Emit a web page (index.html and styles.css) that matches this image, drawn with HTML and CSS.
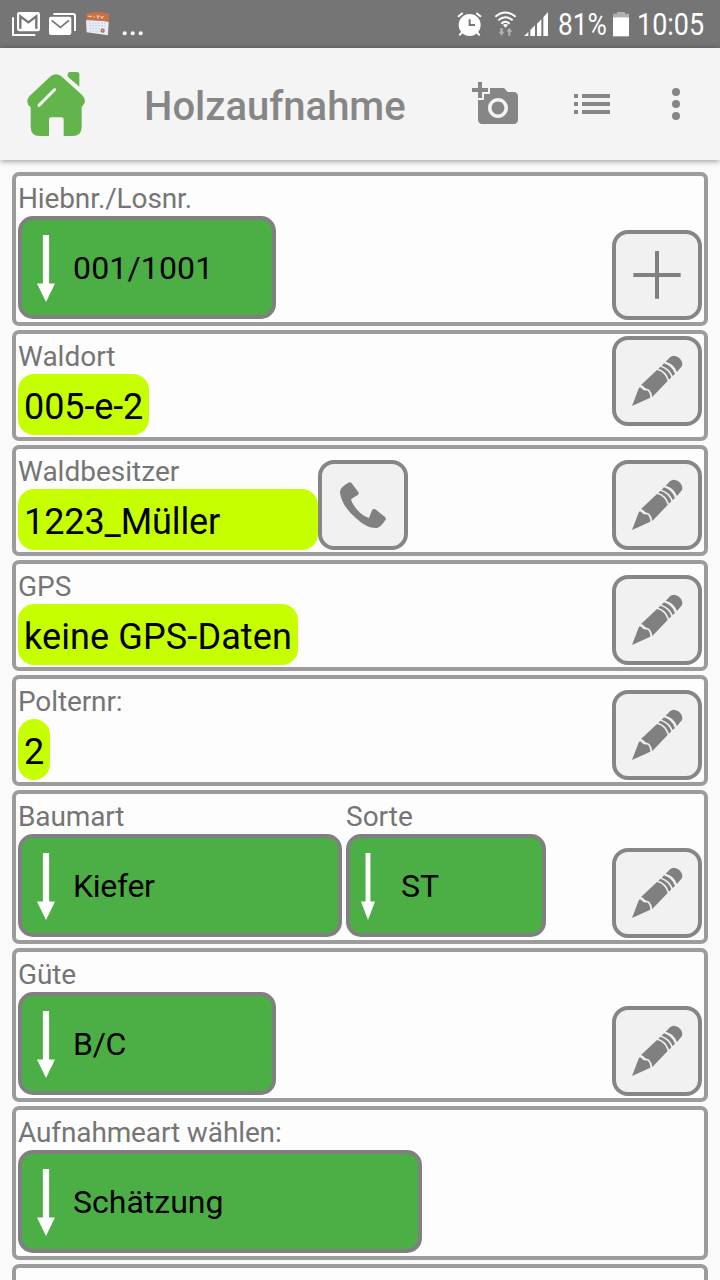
FILE: index.html
```
<!DOCTYPE html>
<html lang="de">
<head>
<meta charset="utf-8">
<title>Holzaufnahme</title>
<link rel="stylesheet" href="styles.css">
</head>
<body>
<svg class="defs" width="0" height="0" aria-hidden="true">
  <symbol id="pencil" viewBox="78 525 246 246">
    <path d="M126 723L147 668Q153 666 156 671Q160 677 168 676Q176 677 178 684Q181 690 181 698Z"/>
    <path d="M153 660L201 615Q224 620 233 648L187 696Q186 683 178 674Q170 671 165 669Q160 662 153 660Z"/>
    <path d="M205 611L211 605Q237 614 244 637L237 644Q227 617 205 611Z"/>
    <path d="M215 602L222 595Q248 604 255 627L248 633Q239 610 215 602Z"/>
    <path d="M227 590L240 577Q250 568 265 577Q280 588 276 603L261 621Q252 596 227 590Z"/>
  </symbol>
  <symbol id="arrow" viewBox="0 0 55 200" preserveAspectRatio="none">
    <path d="M18 0H37V145H55L27.500 200L0 145H18Z"/>
  </symbol>
</svg>

<div class="status">
  <svg class="notices" width="150" height="48" viewBox="0 0 450 144">
    <path d="M39 52V105H106" fill="none" stroke="#fff" stroke-width="6"/>
    <rect x="51" y="36" width="69" height="58" rx="7" fill="#fff"/>
    <path d="M61 86V49L85 67L109 49V86" fill="none" stroke="#757575" stroke-width="7"/>
    <path d="M160 42H219Q225 42 225 48V93" fill="none" stroke="#fff" stroke-width="6"/>
    <rect x="147" y="50" width="67" height="55" rx="6" fill="#fff"/>
    <path d="M155 61L181 82L207 61" fill="none" stroke="#757575" stroke-width="5"/>
    <path d="M258 60L326 64L324 106L260 97Z" fill="#e9edf3"/>
    <path d="M258 41Q291 33 327 41L326 66Q292 58 260 61Z" fill="#cc7044"/>
    <path d="M265 49H276M281 51H285M290 48H299M294 48V56M302 48L306 55L311 48" fill="none" stroke="#f6dccd" stroke-width="3"/>
    <path d="M267 69H317M268 77H318M268 85H316M269 93H299" stroke="#b8cce8" stroke-width="3" stroke-dasharray="5 4"/>
    <circle cx="308" cy="92" r="5" fill="#e5a14d" stroke="#4b3d38" stroke-width="2"/>
    <g fill="#fff"><circle cx="374" cy="100" r="6"/><circle cx="398" cy="100" r="6"/><circle cx="422" cy="100" r="6"/></g>
  </svg>
  <svg class="signals" width="100" height="48" viewBox="39 0 300 144">
    <circle cx="89" cy="75" r="33" fill="#fff"/>
    <path d="M54 50L68 39M109 39L123 50M67 96L58 106M110 96L119 106" stroke="#fff" stroke-width="6"/>
    <path d="M89 58V75H105" fill="none" stroke="#757575" stroke-width="6"/>
    <g fill="none" stroke="#fff" stroke-width="6"><path d="M166 50Q196 25 227 50"/><path d="M175 61Q196 43 218 61"/><path d="M184 71Q196 60 209 71"/></g>
    <path d="M189 75Q196 69 204 75L196 83Z" fill="#fff"/>
    <path d="M181 84H188V95H193L185 107L176 95H181ZM205 107H211V95H217L208 83L200 95H205Z" fill="#b4b4b4"/>
    <path d="M252 108L265 96V108ZM271 108V90L285 76V108ZM291 108V71L304 58V108ZM310 108V52L324 36V108Z" fill="#fff"/>
  </svg>
  <span class="percent">81%</span>
  <svg class="battery" width="16" height="48" viewBox="0 0 48 144"><path d="M0 53V41H12V36H36V41H48V53Z" fill="#b0b0b0"/><path d="M0 52H48V109H0Z" fill="#fff"/></svg>
  <span class="clock">10:05</span>
</div>

<header class="bar">
  <svg class="home" width="60" height="66" viewBox="81 213 180 198">
    <path d="M203 224Q203 216 211 216H230Q238 216 238 224V260L203 231Z" fill="#62b44b"/>
    <path d="M152 229Q168 216 184 229L247 286Q261 302 250 315L245 321V380Q245 408 217 408H191V358Q191 352 185 352H153Q147 352 147 358V408H120Q92 408 92 380V322Q74 307 88 289Z" fill="#62b44b"/>
    <path d="M201 231L242 268" stroke="#f4f4f4" stroke-width="5"/>
    <path d="M117 316L164 269" stroke="#f4f4f4" stroke-width="9" stroke-linecap="round"/>
  </svg>
  <h1 class="title">Holzaufnahme</h1>
  <svg class="camera" width="48" height="48" viewBox="0 0 24 24"><path fill-rule="evenodd" d="M3 4V1h2v3h3v2H5v3H3V6H0V4zM6 10V7h3V4h7l1.830 2H21c1.100 0 2 .9 2 2v12c0 1.100-.9 2-2 2H5c-1.100 0-2-.9-2-2V10zM13 19c2.760 0 5-2.240 5-5s-2.240-5-5-5-5 2.240-5 5 2.240 5 5 5zM9.800 14c0 1.770 1.430 3.200 3.200 3.200s3.200-1.430 3.200-3.200-1.430-3.200-3.200-3.200-3.200 1.430-3.200 3.200z"/></svg>
  <svg class="list" width="36" height="20" viewBox="0 0 36 20"><path d="M0 0h4v4H0zM8 0h28v4H8zM0 8h4v4H0zM8 8h28v4H8zM0 16h4v4H0zM8 16h28v4H8z"/></svg>
  <svg class="more" width="8" height="32" viewBox="0 0 8 32"><circle cx="4" cy="4" r="4"/><circle cx="4" cy="16" r="4"/><circle cx="4" cy="28" r="4"/></svg>
</header>

<main class="form">
  <section class="card tall">
    <div class="field"><span class="label snug">Hiebnr./Losnr.</span>
      <div class="drop w258 loose"><svg class="arrow"><use href="#arrow"/></svg>001/1001</div></div>
    <div class="tool"><svg viewBox="78 207 246 246"><path d="M195 258H207V324H272V336H207V401H195V336H130V324H195Z"/></svg></div>
  </section>
  <section class="card">
    <div class="field"><span class="label">Waldort</span><span class="chip place">005-e-2</span></div>
    <div class="tool top"><svg><use href="#pencil"/></svg></div>
  </section>
  <section class="card">
    <div class="field"><span class="label">Waldbesitzer</span><span class="chip wide">1223_Müller</span></div>
    <div class="tool call"><svg viewBox="96 72 246 246"><path d="M174 129Q181 124 185 130L205 156Q208 161 203 165L183 178Q187 193 202 210Q218 228 237 234L246 211Q250 205 256 208L284 230Q290 235 286 240Q274 260 261 264Q233 267 198 235Q155 197 150 158Q149 143 174 129Z"/></svg></div>
    <div class="tool"><svg><use href="#pencil"/></svg></div>
  </section>
  <section class="card">
    <div class="field"><span class="label">GPS</span><span class="chip gps">keine GPS-Daten</span></div>
    <div class="tool"><svg><use href="#pencil"/></svg></div>
  </section>
  <section class="card">
    <div class="field"><span class="label snug">Polternr:</span><span class="chip">2</span></div>
    <div class="tool"><svg><use href="#pencil"/></svg></div>
  </section>
  <section class="card tall">
    <div class="field"><span class="label snug">Baumart</span>
      <div class="drop w324 tight"><svg class="arrow"><use href="#arrow"/></svg>Kiefer</div></div>
    <div class="field"><span class="label">Sorte</span>
      <div class="drop w200"><svg class="arrow slim"><use href="#arrow"/></svg>ST</div></div>
    <div class="tool"><svg><use href="#pencil"/></svg></div>
  </section>
  <section class="card tall">
    <div class="field"><span class="label snug">Güte</span>
      <div class="drop w258 tight"><svg class="arrow"><use href="#arrow"/></svg>B/C</div></div>
    <div class="tool"><svg><use href="#pencil"/></svg></div>
  </section>
  <section class="card tall">
    <div class="field"><span class="label snug">Aufnahmeart wählen:</span>
      <div class="drop w404"><svg class="arrow"><use href="#arrow"/></svg>Schätzung</div></div>
  </section>
  <section class="card cut"></section>
</main>
</body>
</html>
```
FILE: styles.css
```
* { box-sizing: border-box; }
body {
  margin: 0;
  height: 1280px;
  overflow: hidden;
  display: flex;
  flex-direction: column;
  background: #fafafa;
  font-family: Roboto, "Liberation Sans", sans-serif;
}
svg { display: block; flex: none; }
.defs { position: absolute; }

.status {
  flex: none;
  height: 48px;
  display: flex;
  align-items: center;
  background: #757575;
  color: #fff;
  font-size: 31px;
  line-height: 48px;
  white-space: nowrap;
}
.signals { margin-left: 303px; }
.percent, .clock { transform-origin: 0 50%; padding-top: 2px; }
.percent { width: 48px; margin-left: 5px; transform: scaleX(.85); }
.battery { margin-left: 7px; }
.clock { margin-left: 8px; transform: scaleX(.87); }

.bar {
  flex: none;
  position: relative;
  height: 112px;
  display: flex;
  align-items: center;
  background: #f4f4f4;
  box-shadow: 0 1px 6px rgba(0, 0, 0, .42);
  fill: #868686;
}
.home { margin-left: 27px; }
.title {
  width: 327px;
  margin: 6px 0 0 57px;
  color: #868686;
  font-size: 40px;
  font-weight: 500;
  line-height: 48px;
}
.camera { margin-left: 1px; }
.list { margin-left: 54px; }
.more { margin-left: 62px; }

.form {
  flex: none;
  display: flex;
  flex-direction: column;
  gap: 4px;
  padding: 12px 12px 0;
}
.card {
  flex: none;
  height: 111px;
  display: flex;
  padding: 2px;
  border: 4px solid #9c9c9c;
  border-radius: 7px;
  background: #fdfdfd;
}
.tall { height: 154px; }
.cut {
  height: 16px;
  border-bottom: 0;
  border-radius: 7px 7px 0 0;
}
.field {
  display: flex;
  flex-direction: column;
  align-items: flex-start;
}
.field + .field { margin-left: 4px; }
.label {
  height: 38px;
  color: #757575;
  font-size: 28px;
  line-height: 41px;
  white-space: nowrap;
}
.snug { letter-spacing: -.12px; }
.chip {
  height: 61px;
  padding: 0 6px;
  border-radius: 16px;
  background: #c6ff00;
  color: #000;
  font-size: 36px;
  line-height: 67px;
  white-space: nowrap;
}
.place { width: 131px; letter-spacing: -.1px; }
.wide { width: 300px; letter-spacing: -.1px; }
.gps { width: 280px; letter-spacing: .12px; }
.drop {
  height: 103px;
  display: flex;
  align-items: center;
  border: 4px solid #808080;
  border-radius: 15px;
  background: #4caf45;
  color: #000;
  font-size: 32px;
  line-height: 40px;
}
.loose { letter-spacing: .15px; }
.tight { letter-spacing: -.3px; }
.w258 { width: 258px; }
.w324 { width: 324px; }
.w200 { width: 200px; }
.w404 { width: 404px; }
.arrow {
  width: 18px;
  height: 67px;
  margin: 1px 18px 0 15px;
  fill: #fff;
}
.slim { width: 14px; margin: 1px 26px 0 11px; }

.tool {
  flex: none;
  align-self: flex-end;
  width: 90px;
  height: 90px;
  margin-left: auto;
  border: 4px solid #868686;
  border-radius: 16px;
  background: #f1f1f1;
  fill: #808080;
}
.tool svg { width: 82px; height: 82px; }
.top { align-self: flex-start; }
.call { margin-left: 0; }
```
